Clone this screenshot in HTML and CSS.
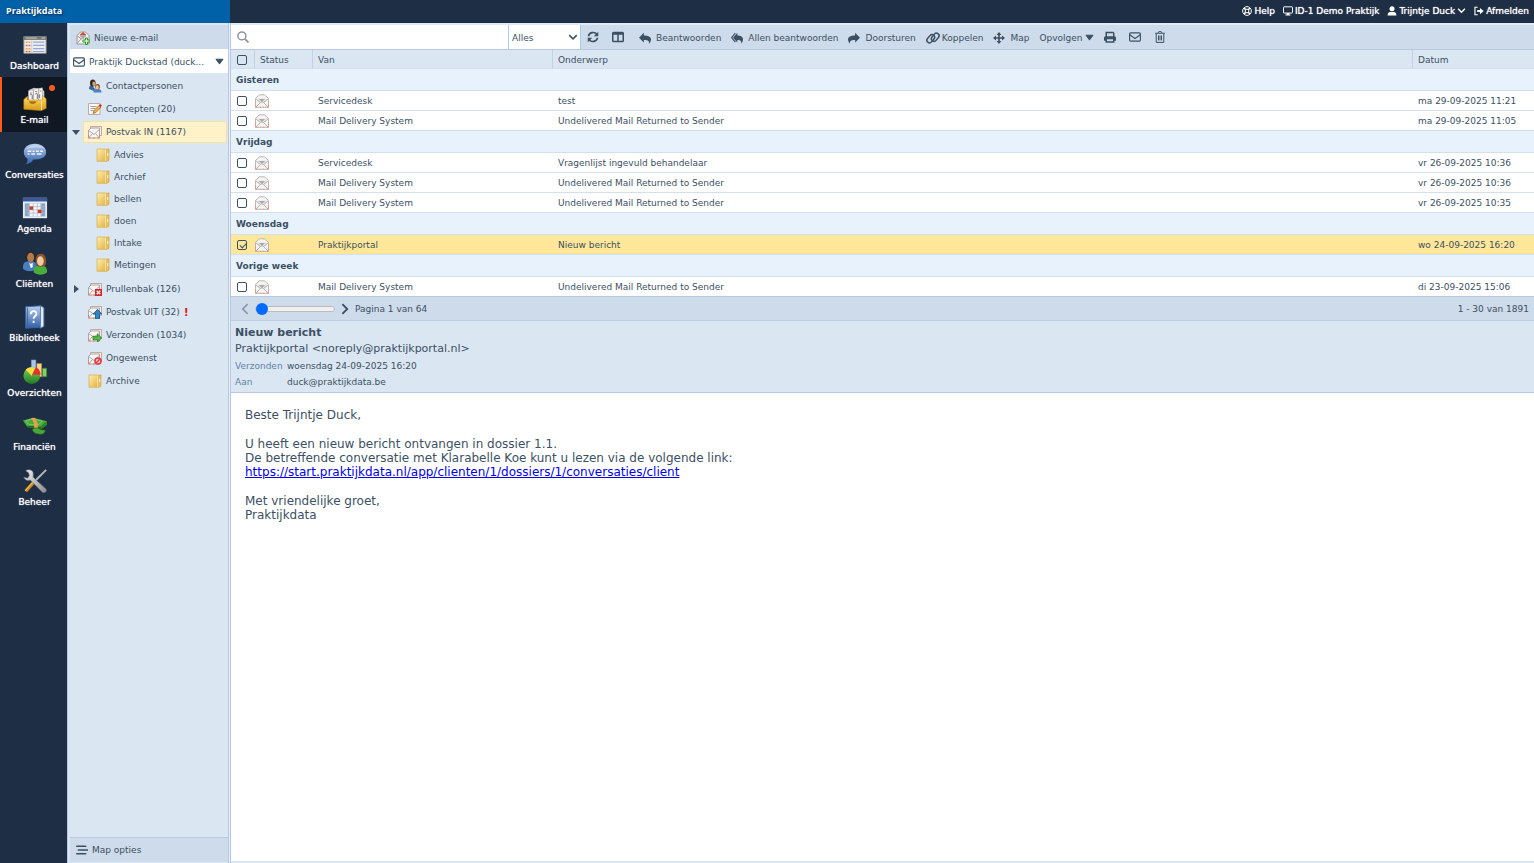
FILE: index.html
```html
<!DOCTYPE html>
<html lang="nl">
<head>
    <meta charset="UTF-8">
    <title>Praktijkdata</title>
    <link rel="stylesheet" href="styles.css">
</head>
<body>
    <svg class="sprite" aria-hidden="true">
        <defs>
            <linearGradient id="gFolder" x1="0" y1="0" x2="1" y2="1"><stop offset="0" stop-color="#fff0b0"/><stop offset="1" stop-color="#e2b13c"/></linearGradient>
            <linearGradient id="gBlue" x1="0" y1="0" x2="0" y2="1"><stop offset="0" stop-color="#b9d0f2"/><stop offset="1" stop-color="#2f5fa8"/></linearGradient>
            <linearGradient id="gTray" x1="0" y1="0" x2="0" y2="1"><stop offset="0" stop-color="#ffdf70"/><stop offset="1" stop-color="#d99a16"/></linearGradient>
            <linearGradient id="gGreen" x1="0" y1="0" x2="0" y2="1"><stop offset="0" stop-color="#7fd05a"/><stop offset="1" stop-color="#1f7a22"/></linearGradient>
            <linearGradient id="gMetal" x1="0" y1="0" x2="1" y2="1"><stop offset="0" stop-color="#f1f1f1"/><stop offset="1" stop-color="#8a8d91"/></linearGradient>
        </defs>

        <!-- small mail icons, 14 x 14 -->
        <symbol id="envelope" viewBox="0 0 14 14">
            <path d="M2.500 1.500h11v9h-11z" fill="#f3efec" stroke="#c3a09a" stroke-width=".9"/>
            <path d="M.5 5.500 3 3h8.500v10H.5z" fill="#f8f7f6" stroke="#a39f9b" stroke-width=".9"/>
            <path d="m.8 5.500 5.200 4 5.200-5M.8 12.800 4.500 8.500M11.200 12.800 7.500 8.500" fill="none" stroke="#a39f9b" stroke-width=".9"/>
            <path d="M.5 10v3h2M11.500 10v3h-2M5 13h2" fill="none" stroke="#dd8478"/>
        </symbol>
        <symbol id="open-mail" viewBox="0 0 14 14">
            <path d="M.5 4.500 4.500.8h5l4 3.700v8.800H.5z" fill="#f5f5f4" stroke="#b3afab" stroke-width=".9"/>
            <path d="M2.500 4.500h9v3L7 9.500l-4.500-2z" fill="#e4e4e4"/>
            <path d="M4 5h6l-3 3z" fill="#a9a9a9"/>
            <path d="M1 5 5.500 8.500 1 13M13 5 8.500 8.500 13 13M5.500 8.500 7 7.500l1.500 1" fill="none" stroke="#b3afab" stroke-width=".9"/>
            <path d="M.5 9v4.300h2M13.500 9v4.300h-2M5 13.300h1M8 13.300h1" fill="none" stroke="#e39b92"/>
        </symbol>
        <symbol id="folder" viewBox="0 0 14 14">
            <path d="M1 1h9.500v12.300H1z" fill="url(#gFolder)" stroke="#dbb45a" stroke-width=".8"/>
            <path d="M10.500 1.500 13 .8v11.400l-2.500 1.100z" fill="#e9c25c" stroke="#d2a544" stroke-width=".7"/>
            <path d="M9.800 1.500v11.500" stroke="#fff6cf" stroke-width=".8"/>
            <path d="M11.800 5v3" stroke="#fffbe8"/>
        </symbol>
        <symbol id="contacts" viewBox="0 0 14 14">
            <path d="M1 10c0-3 1-3.500 3-4l3 4-1 2z" fill="#3566a8"/>
            <ellipse cx="4.800" cy="4" rx="2.800" ry="3.600" fill="#332722"/>
            <ellipse cx="5.800" cy="4.800" rx="1.500" ry="2.300" fill="#d9a074"/>
            <path d="M5.500 13.500c0-3 1.500-3.500 3.800-3.500s4.200.5 4.200 3.500z" fill="#4a82c4"/>
            <ellipse cx="9.500" cy="7.800" rx="2.400" ry="2.800" fill="#8c4d22"/>
            <ellipse cx="9.200" cy="8.400" rx="1.600" ry="2.100" fill="#f0c39c"/>
        </symbol>
        <symbol id="draft" viewBox="0 0 14 14">
            <path d="M.5 1.500h11.500v11H.5z" fill="#fbfaf8" stroke="#c4a7a0"/>
            <path d="M2.500 4.500h6M2.500 6.500h5M2.500 8.500h3" stroke="#8c8c8c" stroke-width=".8"/>
            <path d="m5 11.500 1-3 5-5 2 1.500-5 5.500z" fill="#f3b03b" stroke="#7a5520" stroke-width=".6"/>
            <path d="m10.800 3.700 1.200-1.800 1.900 1.400-1.200 1.900z" fill="#d9262d"/>
        </symbol>
        <symbol id="new-mail" viewBox="0 0 14 14">
            <path d="M1 4.500 4.500 1h5L13 4.500V13H1z" fill="#f5f5f4" stroke="#9c9894"/>
            <path d="M4 3.500 7 1l3 2.500v1H4z" fill="#d04a42"/>
            <path d="M3.500 4.500h7l-3.500 4z" fill="#a9a9a9"/>
            <path d="m1 12.500 4.500-5M1.500 5l4 3" stroke="#9c9894"/>
            <path d="M9.500 7h2v2H14v2h-2.500v2.500h-2V11H7V9h2.500z" fill="#d9f2d2" stroke="#2f9a27"/>
        </symbol>
        <symbol id="trash-mail" viewBox="0 0 14 14">
            <use href="#envelope" width="14" height="14"/>
            <path d="M7 7h7v7H7z" fill="#d8232b"/>
            <path d="m8.700 8.700 3.600 3.600m0-3.600-3.600 3.600" stroke="#fff" stroke-width="1.300"/>
        </symbol>
        <symbol id="out-mail" viewBox="0 0 14 14">
            <use href="#envelope" width="14" height="14"/>
            <path d="m9.500 4.500 4.300 4.500h-2.300v4.800h-4V9H5.200z" fill="#2c86c8" stroke="#1b4f80" stroke-width=".8"/>
        </symbol>
        <symbol id="sent-mail" viewBox="0 0 14 14">
            <use href="#envelope" width="14" height="14"/>
            <path d="M5 8.300h4.500V6L13.800 10l-4.300 3.800v-2.100H5z" fill="#55b848" stroke="#2b7d24" stroke-width=".8"/>
        </symbol>
        <symbol id="spam-mail" viewBox="0 0 14 14">
            <use href="#envelope" width="14" height="14"/>
            <circle cx="10" cy="10" r="3" fill="#fbd5d5" stroke="#e33b44" stroke-width="1.600"/>
            <path d="m8 12 4-4" stroke="#e33b44" stroke-width="1.400"/>
        </symbol>

        <!-- main menu icons, 28 x 28 -->
        <symbol id="m-dashboard" viewBox="0 0 28 28">
            <path d="M2 5h24v18H2z" fill="#eeeeec" stroke="#8a8a86"/>
            <path d="M2 4.500h24v4H2z" fill="#777975"/>
            <path d="M4 6.500h12M21 6.500h4" stroke="#d0d0d0"/>
            <path d="M4 11h5M4 18h5" stroke="#e7a13b" stroke-width="1.500" stroke-dasharray="2 1"/>
            <path d="M4 14.500h5M4 21h5" stroke="#d9604d" stroke-width="1.500" stroke-dasharray="2 1"/>
            <path d="M12 11h12M12 14.500h12M12 18h12M12 21h12" stroke="#8fa9dd" stroke-width="1.300"/>
            <path d="M10.500 9v13.500" stroke="#c9c9c9"/>
        </symbol>
        <symbol id="m-email" viewBox="0 0 28 28">
            <path d="m8 4 5-2 4 1 4-1 3 4v11H8z" fill="#d0d0d0"/>
            <path d="m7 5 5-1v14H7zM12.500 3.500l5-1V18h-5zM18 3l4-1v15h-4z" fill="#f8f8f8" stroke="#a7a7a7" stroke-width=".7"/>
            <path d="M8.500 7.500h2M14 6h2M19 5.500h2" stroke="#d35b50"/>
            <path d="M9 10c0-1.500 2-1.500 2 0v4M14.500 9c0-1.500 2-1.500 2 0v5M19 9v4" fill="none" stroke="#606870"/>
            <path d="M2 14.500 6 11v4h16v-5l4 4v10l-5 2.500L2 25z" fill="url(#gTray)" stroke="#c48a13" stroke-width=".6"/>
            <path d="M7.500 16.500c0 4 8 4 8 0z" fill="#ab7410"/>
            <path d="M21 15.500V26" stroke="#ffe793"/>
        </symbol>
        <symbol id="m-chat" viewBox="0 0 28 28">
            <path d="M14 3C6 3 2 7 2 12c0 4 2 6 4 7 0 3-1 5-2 6 4 0 7-2 8-5 9 0 14-3 14-8s-5-9-12-9z" fill="url(#gBlue)"/>
            <path d="M5 9c2-5 16-6 19-1-5-2-13-2-19 1z" fill="#d6e3f7" opacity=".7"/>
            <path d="M6 11h4M11.500 11h2M15 11h3M19.500 11h3M6 14h2M10 14h4M16 14h5" stroke="#f2f6fc" stroke-width="1.500"/>
        </symbol>
        <symbol id="m-agenda" viewBox="0 0 28 28">
            <path d="M1 3h26v22H1z" fill="#e7edf4"/>
            <path d="M1 3h26v4H1z" fill="#3b5a9a"/>
            <path d="M3 9h22v14H3z" fill="#8ea4c4"/>
            <path d="M8 9h12v14H8z" fill="#f7f7f7"/>
            <path d="M3 12.500h22M3 16h22M3 19.500h22M7.500 9v14M12 9v14M16.500 9v14M21 9v14" stroke="#a8b8cc" stroke-width=".8"/>
            <path d="M8 12.500h4V16H8zM17 16h4v3.500h-4z" fill="#d8341f"/>
        </symbol>
        <symbol id="m-clients" viewBox="0 0 28 28">
            <path d="M1 20c0-7 2-8 8-8s7 2 7 8c-3 4-12 4-15 0z" fill="#4a7cc0"/>
            <path d="M4 7c0-8 11-8 10 0l-1 4H5z" fill="#2f2521"/>
            <ellipse cx="9.300" cy="8" rx="3.800" ry="5" fill="#b67b4b"/>
            <path d="m7.500 13.500 2 1.500 2-1.500v5l-2 1z" fill="#fff"/>
            <path d="M12.500 24c0-6 2-7 7.500-7s7 2 7 7c-3 3.500-11 3.500-14.500 0z" fill="#48b038"/>
            <path d="M15 15c-1-8 1-11 5.500-11s6.500 5 5 12l-3 2h-5z" fill="#8b552c"/>
            <ellipse cx="19.800" cy="12" rx="3.600" ry="5.200" fill="#f1c9a2"/>
        </symbol>
        <symbol id="m-library" viewBox="0 0 28 28">
            <path d="m4 3 16-1v23L4 26z" fill="url(#gBlue)" stroke="#3a66a3"/>
            <path d="m20 2 3.500 2v20L20 26z" fill="#e9eef5" stroke="#5b7fae"/>
            <path d="M6 4v21" stroke="#3f69a6"/>
            <path d="M9.500 11c0-5 7-4 6 0 0 2-3 2-3 5M12.500 18v2.500" fill="none" stroke="#fff" stroke-width="2"/>
        </symbol>
        <symbol id="m-charts" viewBox="0 0 28 28">
            <path d="M10 1h5v16h-5z" fill="#a9c7ee" stroke="#5f88bd" stroke-width=".6"/>
            <path d="M16 5h5v14h-5z" fill="#ffd88d" stroke="#d49b3e" stroke-width=".6"/>
            <path d="M22 10h4.500v9H22z" fill="#82cf67" stroke="#3c8b2c" stroke-width=".6"/>
            <circle cx="10.500" cy="18" r="9" fill="url(#gGreen)"/>
            <path d="M10.500 18 4 11.500c2-2.500 7-3.500 10-1.500z" fill="#ffdf3d"/>
            <path d="m11 17 4-8c3 1 5 5 5 8z" fill="#e6322e"/>
        </symbol>
        <symbol id="m-finance" viewBox="0 0 28 28">
            <path d="m1 8 11-3 15 4-7 6-15-1z" fill="#4aab3a"/>
            <path d="m1 8 4 6 15 1v3L6 16z" fill="#236f20"/>
            <path d="m20 15 7-6v4l-7 5z" fill="#2f8529"/>
            <path d="m4 8.500 8-2.500 10 3-5 4-10-1z" fill="none" stroke="#96d883" stroke-width=".7"/>
            <path d="m10 5.500 4-.5 3 6v6l-4-1v-5z" fill="#e9a04a"/>
            <path d="M11 18c3-3 7-2 9 0l5 .5c0 4-5 5-7 4-3 0-6-1.500-7-4.500z" fill="#4aa83a" stroke="#226c20" stroke-width=".7"/>
        </symbol>
        <symbol id="m-admin" viewBox="0 0 28 28">
            <path d="M26 2 14 14" stroke="#b7babd" stroke-width="2"/>
            <path d="m13 15-9 10" stroke="#d08b1b" stroke-width="3.600"/>
            <path d="m12 15-8.500 9.500" stroke="#ffd469"/>
            <path d="M4 3c3-2 7-1 8 2v5l14 13c1 3-2 4-4 3L9 13c-3 1-6 0-7-3l4 1 2-3-1-3z" fill="url(#gMetal)" stroke="#777b80" stroke-width=".6"/>
        </symbol>

        <!-- single colour icons, 16 x 16 -->
        <symbol id="i-search" viewBox="0 0 16 16"><circle cx="6.500" cy="6.500" r="5.300" fill="none" stroke="currentColor" stroke-width="2"/><path d="m10.500 10.500 4.800 4.800" stroke="currentColor" stroke-width="2.400"/></symbol>
        <symbol id="i-refresh" viewBox="0 0 16 16"><path d="M2 7c.6-5 8-7 11.200-2.500M14 9c-.6 5-8 7-11.200 2.500" fill="none" stroke="currentColor" stroke-width="2.200"/><path d="M15 1v6H9zM1 15V9h6z" fill="currentColor"/></symbol>
        <symbol id="i-columns" viewBox="0 0 16 16"><path fill-rule="evenodd" d="M2 1h12a2 2 0 0 1 2 2v10a2 2 0 0 1-2 2H2a2 2 0 0 1-2-2V3a2 2 0 0 1 2-2zm0 4v8h5V5zm7 0v8h5V5z" fill="currentColor"/></symbol>
        <symbol id="i-reply" viewBox="0 0 16 16"><path d="M6.500 1v3.500C12 4.500 16 6 16 10c0 2-1 4-3 5.500 1-3.500 0-5-6.500-5V14L0 7.500z" fill="currentColor"/></symbol>
        <symbol id="i-reply-all" viewBox="0 0 16 16"><path d="M8.500 1v3.500C13 4.500 16 6 16 10c0 2-1 4-2.500 5.500.5-3.500 0-5-5-5V14L2.700 7.500z" fill="currentColor"/><path d="M5.800 1.500.8 7.500l5 6" fill="none" stroke="currentColor" stroke-width="1.600"/></symbol>
        <symbol id="i-forward" viewBox="0 0 16 16"><path d="M9.500 1v3.500C4 4.500 0 6 0 10c0 2 1 4 3 5.500-1-3.500 0-5 6.500-5V14L16 7.500z" fill="currentColor"/></symbol>
        <symbol id="i-link" viewBox="0 0 18 16"><g fill="none" stroke="currentColor" stroke-width="2"><rect x="0" y="5.500" width="12" height="7" rx="3.500" transform="rotate(-50 6 9)"/><rect x="6" y="3.500" width="12" height="7" rx="3.500" transform="rotate(-50 12 7)"/></g></symbol>
        <symbol id="i-move" viewBox="0 0 16 16"><path d="M8 2v12M2 8h12" stroke="currentColor" stroke-width="2.200"/><path d="m8 0 3.200 4H4.800zM8 16l3.200-4H4.800zM0 8l4-3.200v6.400zM16 8l-4-3.200v6.400z" fill="currentColor"/></symbol>
        <symbol id="i-print" viewBox="0 0 16 16"><path fill-rule="evenodd" d="M2 7V1h10.500L14 2.500V7a2 2 0 0 1 2 2v4h-2v2.500H2V13H0V9a2 2 0 0 1 2-2zm2-4v4h8V3zm0 8v2.500h8V11z" fill="currentColor"/></symbol>
        <symbol id="i-mail" viewBox="0 0 16 16"><rect x=".8" y="2.500" width="14.400" height="11" rx="1.500" fill="none" stroke="currentColor" stroke-width="1.500"/><path d="m1 5 7 5 7-5" fill="none" stroke="currentColor" stroke-width="1.500"/></symbol>
        <symbol id="i-trash" viewBox="0 0 16 16"><path d="M1.500 3h13M5.500 2.500 6.500.8h3l1 1.700M3 3.500v11.700h10V3.500M6 6v6.500M8 6v6.500M10 6v6.500" fill="none" stroke="currentColor" stroke-width="1.300"/></symbol>
        <symbol id="i-help" viewBox="0 0 16 16"><g fill="none" stroke="currentColor" stroke-width="1.600"><circle cx="8" cy="8" r="7"/><circle cx="8" cy="8" r="3"/><path stroke-width="2.600" d="m3 3 3 3m4 4 3 3M3 13l3-3m4-4 3-3"/></g></symbol>
        <symbol id="i-screen" viewBox="0 0 16 16"><rect x=".8" y="1.300" width="14.400" height="10" rx="1" fill="none" stroke="currentColor" stroke-width="1.600"/><path d="M6 11h4v2.500h2V15H4v-1.500h2z" fill="currentColor"/></symbol>
        <symbol id="i-user" viewBox="0 0 16 16"><circle cx="8" cy="4.500" r="4" fill="currentColor"/><path d="M1 15c0-4 2-5.500 4-5.500h6c2 0 4 1.500 4 5.500z" fill="currentColor"/></symbol>
        <symbol id="i-logout" viewBox="0 0 16 16"><path d="M6 2H1.500v12H6" fill="none" stroke="currentColor" stroke-width="1.800"/><path d="M5 6.500h4.500V3l6 5-6 5V9.500H5z" fill="currentColor"/></symbol>
        <symbol id="i-menu" viewBox="0 0 16 16"><path d="M1 3h12M3 8h12.500M1 13h12" stroke="currentColor" stroke-width="2" stroke-linecap="round"/></symbol>
        <symbol id="i-left" viewBox="0 0 16 16"><path d="M11.500 1.500 5 8l6.500 6.500" fill="none" stroke="currentColor" stroke-width="2"/></symbol>
        <symbol id="i-right" viewBox="0 0 16 16"><path d="M4.500 1.500 11 8l-6.500 6.500" fill="none" stroke="currentColor" stroke-width="2.400"/></symbol>
        <symbol id="i-down" viewBox="0 0 16 16"><path d="m2 5 6 6 6-6" fill="none" stroke="currentColor" stroke-width="2.400"/></symbol>
        <symbol id="i-caret" viewBox="0 0 16 16"><path d="M2 4h12l-6 8z" fill="currentColor" stroke="currentColor" stroke-width="2" stroke-linejoin="round"/></symbol>
    </svg>

    <header class="topbar">
        <a class="brand" href="#">Praktijkdata</a>
        <nav class="user-menu">
            <a href="#"><svg class="icon"><use href="#i-help"/></svg>Help</a>
            <a href="#"><svg class="icon"><use href="#i-screen"/></svg>ID-1 Demo Praktijk</a>
            <a href="#"><svg class="icon"><use href="#i-user"/></svg>Trijntje Duck<svg class="chevron"><use href="#i-down"/></svg></a>
            <a href="#"><svg class="icon"><use href="#i-logout"/></svg>Afmelden</a>
        </nav>
    </header>

    <div class="app">
        <nav class="main-menu">
            <div class="menu-items">
                <a href="#"><svg><use href="#m-dashboard"/></svg>Dashboard</a>
                <a href="#" class="active"><svg><use href="#m-email"/></svg>E-mail<span class="badge"></span></a>
                <a href="#"><svg><use href="#m-chat"/></svg>Conversaties</a>
                <a href="#"><svg><use href="#m-agenda"/></svg>Agenda</a>
                <a href="#"><svg><use href="#m-clients"/></svg>Cliënten</a>
                <a href="#"><svg><use href="#m-library"/></svg>Bibliotheek</a>
                <a href="#"><svg><use href="#m-charts"/></svg>Overzichten</a>
                <a href="#"><svg><use href="#m-finance"/></svg>Financiën</a>
                <a href="#"><svg><use href="#m-admin"/></svg>Beheer</a>
            </div>
        </nav>

        <aside class="sidebar">
            <button type="button" class="new-mail"><svg class="mail-icon"><use href="#new-mail"/></svg>Nieuwe e-mail</button>
            <button type="button" class="account"><svg class="icon-lg"><use href="#i-mail"/></svg><span>Praktijk Duckstad (duck...</span><svg class="caret"><use href="#i-caret"/></svg></button>

            <ul class="folders">
                <li><a href="#"><svg class="mail-icon"><use href="#contacts"/></svg>Contactpersonen</a></li>
                <li><a href="#"><svg class="mail-icon"><use href="#draft"/></svg>Concepten (20)</a></li>
                <li class="open">
                    <a href="#" class="selected"><svg class="mail-icon"><use href="#envelope"/></svg>Postvak IN (1167)</a>
                    <ul>
                        <li><a href="#"><svg class="mail-icon"><use href="#folder"/></svg>Advies</a></li>
                        <li><a href="#"><svg class="mail-icon"><use href="#folder"/></svg>Archief</a></li>
                        <li><a href="#"><svg class="mail-icon"><use href="#folder"/></svg>bellen</a></li>
                        <li><a href="#"><svg class="mail-icon"><use href="#folder"/></svg>doen</a></li>
                        <li><a href="#"><svg class="mail-icon"><use href="#folder"/></svg>Intake</a></li>
                        <li><a href="#"><svg class="mail-icon"><use href="#folder"/></svg>Metingen</a></li>
                    </ul>
                </li>
                <li class="closed"><a href="#"><svg class="mail-icon"><use href="#trash-mail"/></svg>Prullenbak (126)</a></li>
                <li><a href="#"><svg class="mail-icon"><use href="#out-mail"/></svg>Postvak UIT (32)<b class="alert">!</b></a></li>
                <li><a href="#"><svg class="mail-icon"><use href="#sent-mail"/></svg>Verzonden (1034)</a></li>
                <li><a href="#"><svg class="mail-icon"><use href="#spam-mail"/></svg>Ongewenst</a></li>
                <li><a href="#"><svg class="mail-icon"><use href="#folder"/></svg>Archive</a></li>
            </ul>

            <button type="button" class="folder-options"><svg class="icon-lg"><use href="#i-menu"/></svg>Map opties</button>
        </aside>

        <main class="mail">
            <div class="toolbar">
                <label class="search"><svg class="icon-lg"><use href="#i-search"/></svg><input type="search" aria-label="Zoeken"></label>
                <div class="filter">
                    <select aria-label="Filter">
                        <option>Alles</option>
                        <option>Ongelezen</option>
                    </select>
                    <svg class="icon"><use href="#i-down"/></svg>
                </div>
                <div class="tools">
                    <button type="button" aria-label="Vernieuwen"><svg class="icon-lg"><use href="#i-refresh"/></svg></button>
                    <button type="button" aria-label="Indeling"><svg class="icon-lg"><use href="#i-columns"/></svg></button>
                </div>
                <div class="actions">
                    <button type="button"><svg class="icon-lg"><use href="#i-reply"/></svg>Beantwoorden</button>
                    <button type="button"><svg class="icon-lg"><use href="#i-reply-all"/></svg>Allen beantwoorden</button>
                    <button type="button"><svg class="icon-lg"><use href="#i-forward"/></svg>Doorsturen</button>
                    <button type="button" class="tight"><svg class="icon-link"><use href="#i-link"/></svg>Koppelen</button>
                    <button type="button"><svg class="icon-lg"><use href="#i-move"/></svg>Map</button>
                    <button type="button" class="tight">Opvolgen<svg class="caret"><use href="#i-caret"/></svg></button>
                </div>
                <div class="tools">
                    <button type="button" aria-label="Afdrukken"><svg class="icon-lg"><use href="#i-print"/></svg></button>
                    <button type="button" aria-label="Markeren"><svg class="icon-lg"><use href="#i-mail"/></svg></button>
                    <button type="button" aria-label="Verwijderen"><svg class="icon-lg"><use href="#i-trash"/></svg></button>
                </div>
            </div>

            <div class="message-list">
                <table>
                    <colgroup>
                        <col class="col-check"><col class="col-status"><col class="col-from"><col><col class="col-date">
                    </colgroup>
                    <thead>
                        <tr><th><input type="checkbox" aria-label="Alles selecteren"></th><th>Status</th><th>Van</th><th>Onderwerp</th><th>Datum</th></tr>
                    </thead>
                    <tbody>
                        <tr class="group"><th colspan="5">Gisteren</th></tr>
                        <tr><td><input type="checkbox" aria-label="Selecteer"></td><td><svg class="mail-icon"><use href="#open-mail"/></svg></td><td>Servicedesk</td><td>test</td><td>ma 29-09-2025 11:21</td></tr>
                        <tr><td><input type="checkbox" aria-label="Selecteer"></td><td><svg class="mail-icon"><use href="#open-mail"/></svg></td><td>Mail Delivery System</td><td>Undelivered Mail Returned to Sender</td><td>ma 29-09-2025 11:05</td></tr>
                        <tr class="group"><th colspan="5">Vrijdag</th></tr>
                        <tr><td><input type="checkbox" aria-label="Selecteer"></td><td><svg class="mail-icon"><use href="#open-mail"/></svg></td><td>Servicedesk</td><td>Vragenlijst ingevuld behandelaar</td><td>vr 26-09-2025 10:36</td></tr>
                        <tr><td><input type="checkbox" aria-label="Selecteer"></td><td><svg class="mail-icon"><use href="#open-mail"/></svg></td><td>Mail Delivery System</td><td>Undelivered Mail Returned to Sender</td><td>vr 26-09-2025 10:36</td></tr>
                        <tr><td><input type="checkbox" aria-label="Selecteer"></td><td><svg class="mail-icon"><use href="#open-mail"/></svg></td><td>Mail Delivery System</td><td>Undelivered Mail Returned to Sender</td><td>vr 26-09-2025 10:35</td></tr>
                        <tr class="group"><th colspan="5">Woensdag</th></tr>
                        <tr class="current"><td><input type="checkbox" aria-label="Selecteer" checked></td><td><svg class="mail-icon"><use href="#open-mail"/></svg></td><td>Praktijkportal</td><td>Nieuw bericht</td><td>wo 24-09-2025 16:20</td></tr>
                        <tr class="group"><th colspan="5">Vorige week</th></tr>
                        <tr><td><input type="checkbox" aria-label="Selecteer"></td><td><svg class="mail-icon"><use href="#open-mail"/></svg></td><td>Mail Delivery System</td><td>Undelivered Mail Returned to Sender</td><td>di 23-09-2025 15:06</td></tr>
                    </tbody>
                </table>
            </div>

            <div class="pager">
                <button type="button" aria-label="Vorige pagina" disabled><svg class="icon-lg"><use href="#i-left"/></svg></button>
                <input type="range" min="1" max="64" value="1" aria-label="Pagina">
                <button type="button" aria-label="Volgende pagina"><svg class="icon-lg"><use href="#i-right"/></svg></button>
                <span>Pagina 1 van 64</span>
                <span class="total">1 - 30 van 1891</span>
            </div>

            <div class="message-head">
                <h1>Nieuw bericht</h1>
                <p class="sender">Praktijkportal &lt;noreply@praktijkportal.nl&gt;</p>
                <dl>
                    <dt>Verzonden</dt><dd>woensdag 24-09-2025 16:20</dd>
                    <dt>Aan</dt><dd>duck@praktijkdata.be</dd>
                </dl>
            </div>

            <article class="message-body">
                <p>Beste Trijntje Duck,</p>
                <p>U heeft een nieuw bericht ontvangen in dossier 1.1.<br>
                De betreffende conversatie met Klarabelle Koe kunt u lezen via de volgende link:<br>
                <a href="#">https://start.praktijkdata.nl/app/clienten/1/dossiers/1/conversaties/client</a></p>
                <p>Met vriendelijke groet,<br>
                Praktijkdata</p>
            </article>
        </main>
    </div>
</body>
</html>
```

FILE: styles.css
```css
* {
    box-sizing: border-box;
}

body {
    margin: 0;
    height: 100vh;
    display: flex;
    flex-direction: column;
    font-family: Verdana, "DejaVu Sans", sans-serif;
    font-size: 9px;
    color: #3c5063;
    background-color: #dae6f2;
    overflow: hidden;
}

a {
    color: inherit;
    text-decoration: none;
}

button {
    display: flex;
    align-items: center;
    padding: 0;
    border: none;
    background: none;
    font: inherit;
    color: inherit;
    cursor: pointer;
}

svg {
    display: block;
    flex: none;
}

.sprite {
    position: absolute;
    width: 0;
    height: 0;
}

.icon {
    width: 10px;
    height: 10px;
}

.icon-lg {
    width: 12px;
    height: 12px;
}

.icon-link {
    width: 14px;
    height: 12px;
}

.mail-icon {
    width: 14px;
    height: 14px;
}

.caret,
.chevron {
    width: 9px;
    height: 9px;
}

/* top bar */
.topbar {
    display: flex;
    flex: none;
    height: 23px;
    line-height: 22px;
    background-color: #1e2e44;
    color: #fff;
}

.brand {
    width: 230px;
    padding-left: 6px;
    background-color: #0060a8;
    font-family: "Open Sans", sans-serif;
    font-weight: 700;
    text-shadow: 1px 1px 2px #002a50;
}

.user-menu {
    display: flex;
    gap: 8px;
    margin-left: auto;
    padding: 0 5px 2px 0;
}

.user-menu a {
    display: flex;
    align-items: center;
    gap: 2px;
    text-shadow: 0 0 1px #fff;
}

/* main menu */
.app {
    display: flex;
    flex: 1;
    min-height: 0;
}

.main-menu {
    flex: none;
    width: 67px;
    background-color: #1e2e44;
    color: #fff;
}

.menu-items {
    display: grid;
    grid-auto-rows: 1fr;
    height: 490px;
}

.menu-items a {
    position: relative;
    display: flex;
    flex-direction: column;
    align-items: center;
    gap: 1px;
    padding: 9px 0 0 2px;
    line-height: 14px;
    text-shadow: 0 0 1px #fff;
}

.menu-items svg {
    width: 26px;
    height: 26px;
}

.menu-items .active {
    background-color: #101824;
    box-shadow: inset 2px 0 #ff5a1f;
}

.badge {
    position: absolute;
    top: 8px;
    right: 12px;
    width: 6px;
    height: 6px;
    border-radius: 50%;
    background-color: #ff5a1f;
}

/* folders */
.sidebar {
    display: flex;
    flex-direction: column;
    flex: none;
    width: 164px;
    padding: 2px 2px 1px 2px;
    border-left: 1px solid #b7c8e0;
    border-right: 1px solid #b7c8e0;
    box-shadow: inset -1px 0 #e6effa, inset -2px 0 #b7c8e0;
}

.new-mail,
.folder-options {
    height: 24px;
    gap: 4px;
    padding-left: 6px;
    background-color: #cedbea;
}

.new-mail {
    padding-top: 1px;
}

.account {
    height: 24px;
    gap: 4px;
    padding: 1px 4px 0 3px;
    background-color: #fff;
}

.account .caret {
    margin-left: auto;
}

.folders,
.folders ul {
    margin: 0;
    padding: 0;
    list-style: none;
}

.folders {
    flex: 1;
    padding-top: 2px;
}

.folders ul {
    padding-bottom: 2px;
}

.folders li {
    position: relative;
}

.folders a {
    display: flex;
    align-items: center;
    gap: 4px;
    height: 22px;
    margin: 0 1px 1px 13px;
    padding-left: 4px;
    border: 1px solid transparent;
}

.folders ul a {
    margin-bottom: 0;
    padding-left: 12px;
}

.folders .selected {
    background-color: #fff1c8;
    border-color: #fae09a;
    border-radius: 2px;
}

.open::before,
.closed::before {
    content: "";
    position: absolute;
    top: 9px;
    left: 2px;
    border: 4px solid transparent;
    border-top: 5px solid #3c5063;
    border-bottom: 0;
}

.closed::before {
    top: 7px;
    left: 4px;
    border: 4px solid transparent;
    border-left: 5px solid #3c5063;
    border-right: 0;
}

.alert {
    color: #f0141e;
    font-size: 11px;
}

.folder-options {
    height: 25px;
    border-top: 1px solid #b7c8e0;
}

/* toolbar */
.mail {
    display: flex;
    flex-direction: column;
    flex: 1;
    min-width: 0;
}

.toolbar {
    display: flex;
    flex: none;
    align-items: stretch;
    height: 27px;
    border-top: 2px solid #dfeaf6;
    border-bottom: 1px solid #b7c8e0;
    background-color: #cedbea;
}

.search {
    display: flex;
    align-items: center;
    width: 277px;
    padding-left: 6px;
    background-color: #fff;
    color: #8a96a3;
}

.search input {
    flex: 1;
    min-width: 0;
    border: none;
    outline: none;
    background: none;
    font: inherit;
}

.filter {
    display: flex;
    align-items: center;
    width: 73px;
    border: solid #a9cdea;
    border-width: 0 1px;
    background-color: #fff;
}

.filter select {
    flex: 1;
    height: 100%;
    padding: 1px 3px 0;
    border: none;
    appearance: none;
    background: none;
    font: inherit;
    color: inherit;
}

.filter .icon {
    margin-right: 2px;
    pointer-events: none;
}

.tools {
    display: flex;
    gap: 13px;
    padding: 0 6px;
}

.actions {
    display: flex;
    gap: 10px;
    padding: 1px 4px 0 9px;
}

.actions button {
    gap: 5px;
}

.actions .tight {
    gap: 2px;
}

/* message list */
.message-list {
    flex: none;
    height: 246px;
    overflow: hidden;
    background-color: #fff;
}

table {
    width: 100%;
    table-layout: fixed;
    border-collapse: separate;
    border-spacing: 0;
}

.col-check {
    width: 24px;
}

.col-status {
    width: 58px;
}

.col-from {
    width: 240px;
}

.col-date {
    width: 121px;
}

th,
td {
    height: 20px;
    padding: 0 0 0 5px;
    border-bottom: 1px solid #d3dfec;
    text-align: left;
    font-weight: normal;
    white-space: nowrap;
}

thead th {
    height: 19px;
    padding-top: 1px;
    background-color: #dae6f2;
    border-right: 1px solid #c3d1e2;
}

thead th:last-child {
    border-right: none;
}

td:nth-child(2) {
    padding-left: 0;
}

td:first-child,
thead th:first-child {
    padding-left: 6px;
}

.group th {
    height: 22px;
    background-color: #e7f2fc;
    font-weight: bold;
}

.current td {
    background-color: #ffe799;
}

input[type="checkbox"] {
    display: block;
    width: 10px;
    height: 10px;
    margin: 0;
    appearance: none;
    border: 1px solid #3c5063;
    border-radius: 2px;
}

input[type="checkbox"]:checked::before {
    content: "";
    display: block;
    width: 5px;
    height: 3px;
    margin: 2px 0 0 2px;
    border-left: 1px solid #3c5063;
    border-bottom: 1px solid #3c5063;
    transform: rotate(-45deg);
}

/* pager */
.pager {
    display: flex;
    flex: none;
    align-items: center;
    gap: 4px;
    height: 25px;
    padding: 0 5px 0 8px;
    border-top: 1px solid #b7c8e0;
    border-bottom: 1px solid #c0cfe2;
    background-color: #cedbea;
}

.pager button:disabled {
    color: #8495a8;
}

.pager .total {
    margin-left: auto;
}

input[type="range"] {
    width: 80px;
    height: 12px;
    margin: 0;
    appearance: none;
    background: none;
}

input[type="range"]::-webkit-slider-runnable-track {
    height: 6px;
    border: 1px solid #bcbcbc;
    border-radius: 3px;
    background-color: #efefef;
}

input[type="range"]::-webkit-slider-thumb {
    appearance: none;
    width: 12px;
    height: 12px;
    margin-top: -4px;
    border-radius: 50%;
    background-color: #006cff;
}

/* message */
.message-head {
    flex: none;
    height: 72px;
    padding: 4px 4px 0;
    border-bottom: 1px solid #b7c8e0;
}

.message-head h1 {
    margin: 0;
    font-size: 11px;
    line-height: 15px;
}

.sender {
    margin: 0;
    font-size: 11px;
    line-height: 18px;
}

.message-head dl {
    display: grid;
    grid-template-columns: 52px 1fr;
    margin: 0;
    line-height: 16px;
}

.message-head dt {
    color: #6583a8;
}

.message-head dd {
    margin: 0;
}

.message-body {
    flex: 1;
    padding: 15px 14px;
    margin-bottom: 2px;
    background-color: #fff;
    font-size: 12px;
    line-height: 14px;
}

.message-body p {
    margin: 0 0 15px;
}

.message-body a {
    color: #0000ee;
    text-decoration: underline;
}
```
